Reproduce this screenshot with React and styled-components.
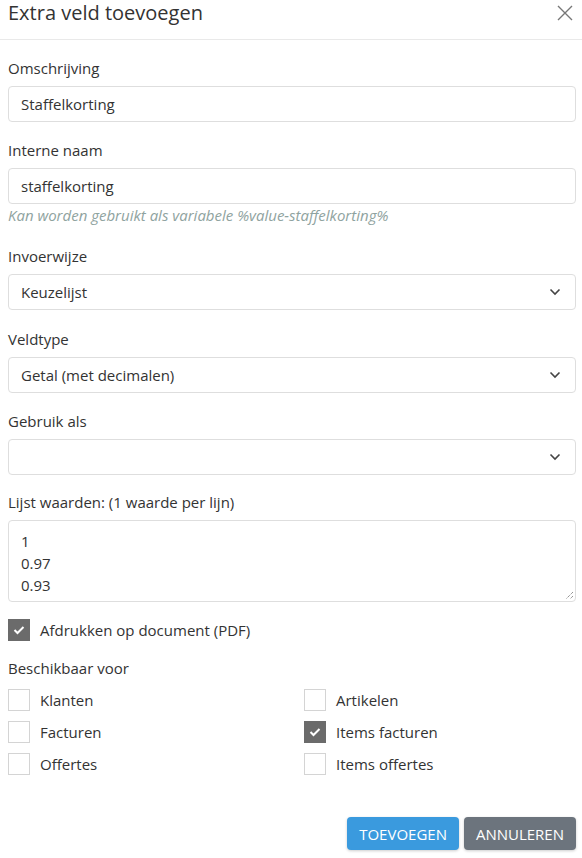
import styled, { createGlobalStyle } from "styled-components";

const GlobalStyle = createGlobalStyle`
  body {
    margin: 0;
    background: #fff;
    font-family: "Open Sans", "Noto Sans", sans-serif;
    color: #333;
  }
  * { box-sizing: border-box; }
`;

const Modal = styled.div`
  width: 582px;
  min-height: 858px;
  background: #fff;
`;

const ModalHeader = styled.div`
  height: 40px;
  display: flex;
  align-items: flex-start;
  justify-content: space-between;
  padding: 0 6px 0 8px;
  border-bottom: 1px solid #e9e9e9;
`;

const Title = styled.h1`
  margin: 0;
  font-size: 20px;
  line-height: 26px;
  font-weight: 400;
  color: #333;
`;

const CloseBtn = styled.button`
  border: 0;
  background: none;
  padding: 0;
  width: 22px;
  height: 26px;
  display: flex;
  align-items: center;
  justify-content: center;
  cursor: pointer;
`;

const Body = styled.div`
  padding: 17px 6px 0 8px;
`;

const Group = styled.div`
  margin-bottom: ${({ $gap }) => $gap || 17}px;
`;

const Label = styled.label`
  display: block;
  font-size: 15px;
  line-height: 22px;
  margin-bottom: 7px;
  color: #333;
`;

const Input = styled.div`
  width: 100%;
  height: 36px;
  border: 1px solid #dedede;
  border-radius: 4px;
  display: flex;
  align-items: center;
  justify-content: space-between;
  padding: 0 14px 0 12px;
  font-size: 15px;
  color: #333;
`;

const Help = styled.div`
  font-size: 15px;
  font-style: italic;
  color: #8fa3a0;
  line-height: 22px;
`;

const TextArea = styled.div`
  position: relative;
  width: 100%;
  height: 82px;
  border: 1px solid #dedede;
  border-radius: 4px;
  padding: 9px 12px;
  font-size: 15px;
  line-height: 22px;
`;

const Grip = styled.svg`
  position: absolute;
  right: 1px;
  bottom: 1px;
`;

const CheckRow = styled.div`
  display: flex;
  align-items: center;
  gap: 10px;
  height: 22px;
  font-size: 15px;
`;

const Box = styled.span`
  width: 22px;
  height: 22px;
  flex: none;
  border: 1px solid ${({ $checked }) => ($checked ? "#6b6b6b" : "#d4d4d4")};
  background: ${({ $checked }) => ($checked ? "#6b6b6b" : "#fff")};
  display: flex;
  align-items: center;
  justify-content: center;
`;

const SubLabel = styled.div`
  font-size: 15px;
  line-height: 22px;
  margin: 16px 0 10px;
`;

const Grid = styled.div`
  display: grid;
  grid-template-columns: 296px 1fr;
  row-gap: 10px;
`;

const Footer = styled.div`
  display: flex;
  justify-content: flex-end;
  gap: 5px;
  padding-top: 42px;
`;

const Button = styled.button`
  height: 33px;
  border: 0;
  border-radius: 4px;
  padding: 0 12px;
  font-family: "Open Sans", "Noto Sans", sans-serif;
  font-size: 15px;
  text-transform: uppercase;
  color: #fff;
  background: ${({ $variant }) => ($variant === "primary" ? "#3a9ade" : "#6c747d")};
  box-shadow: 0 1px 3px rgba(0, 0, 0, 0.2);
`;

function Chevron() {
  return (
    <svg width="12" height="8" viewBox="0 0 12 8">
      <path d="M1.5 1.5 L6 6 L10.5 1.5" fill="none" stroke="#444" strokeWidth="1.6" />
    </svg>
  );
}

function Check({ checked, label }) {
  return (
    <CheckRow>
      <Box $checked={checked}>
        {checked && (
          <svg width="12" height="10" viewBox="0 0 12 10">
            <path d="M1.5 5 L4.5 8 L10.5 2" fill="none" stroke="#fff" strokeWidth="2" />
          </svg>
        )}
      </Box>
      {label}
    </CheckRow>
  );
}

export default function App() {
  return (
    <>
      <GlobalStyle />
      <Modal>
        <ModalHeader>
          <Title>Extra veld toevoegen</Title>
          <CloseBtn aria-label="Sluiten">
            <svg width="16" height="16" viewBox="0 0 16 16">
              <path d="M1 1 L15 15 M15 1 L1 15" stroke="#777" strokeWidth="1.4" />
            </svg>
          </CloseBtn>
        </ModalHeader>
        <Body>
          <Group>
            <Label>Omschrijving</Label>
            <Input>Staffelkorting</Input>
          </Group>
          <Group $gap={19}>
            <Label>Interne naam</Label>
            <Input>staffelkorting</Input>
            <Help>Kan worden gebruikt als variabele %value-staffelkorting%</Help>
          </Group>
          <Group $gap={18}>
            <Label>Invoerwijze</Label>
            <Input>
              Keuzelijst
              <Chevron />
            </Input>
          </Group>
          <Group $gap={17}>
            <Label>Veldtype</Label>
            <Input>
              Getal (met decimalen)
              <Chevron />
            </Input>
          </Group>
          <Group $gap={16}>
            <Label>Gebruik als</Label>
            <Input>
              <span />
              <Chevron />
            </Input>
          </Group>
          <Group>
            <Label>Lijst waarden: (1 waarde per lijn)</Label>
            <TextArea>
              1<br />0.97<br />0.93
              <Grip width="10" height="10" viewBox="0 0 10 10">
                <path d="M9 2 L2 9 M9 6 L6 9" stroke="#666" strokeWidth="1" strokeDasharray="1 1" />
              </Grip>
            </TextArea>
          </Group>
          <Check checked label="Afdrukken op document (PDF)" />
          <SubLabel>Beschikbaar voor</SubLabel>
          <Grid>
            <Check label="Klanten" />
            <Check label="Artikelen" />
            <Check label="Facturen" />
            <Check checked label="Items facturen" />
            <Check label="Offertes" />
            <Check label="Items offertes" />
          </Grid>
          <Footer>
            <Button $variant="primary">Toevoegen</Button>
            <Button>Annuleren</Button>
          </Footer>
        </Body>
      </Modal>
    </>
  );
}
